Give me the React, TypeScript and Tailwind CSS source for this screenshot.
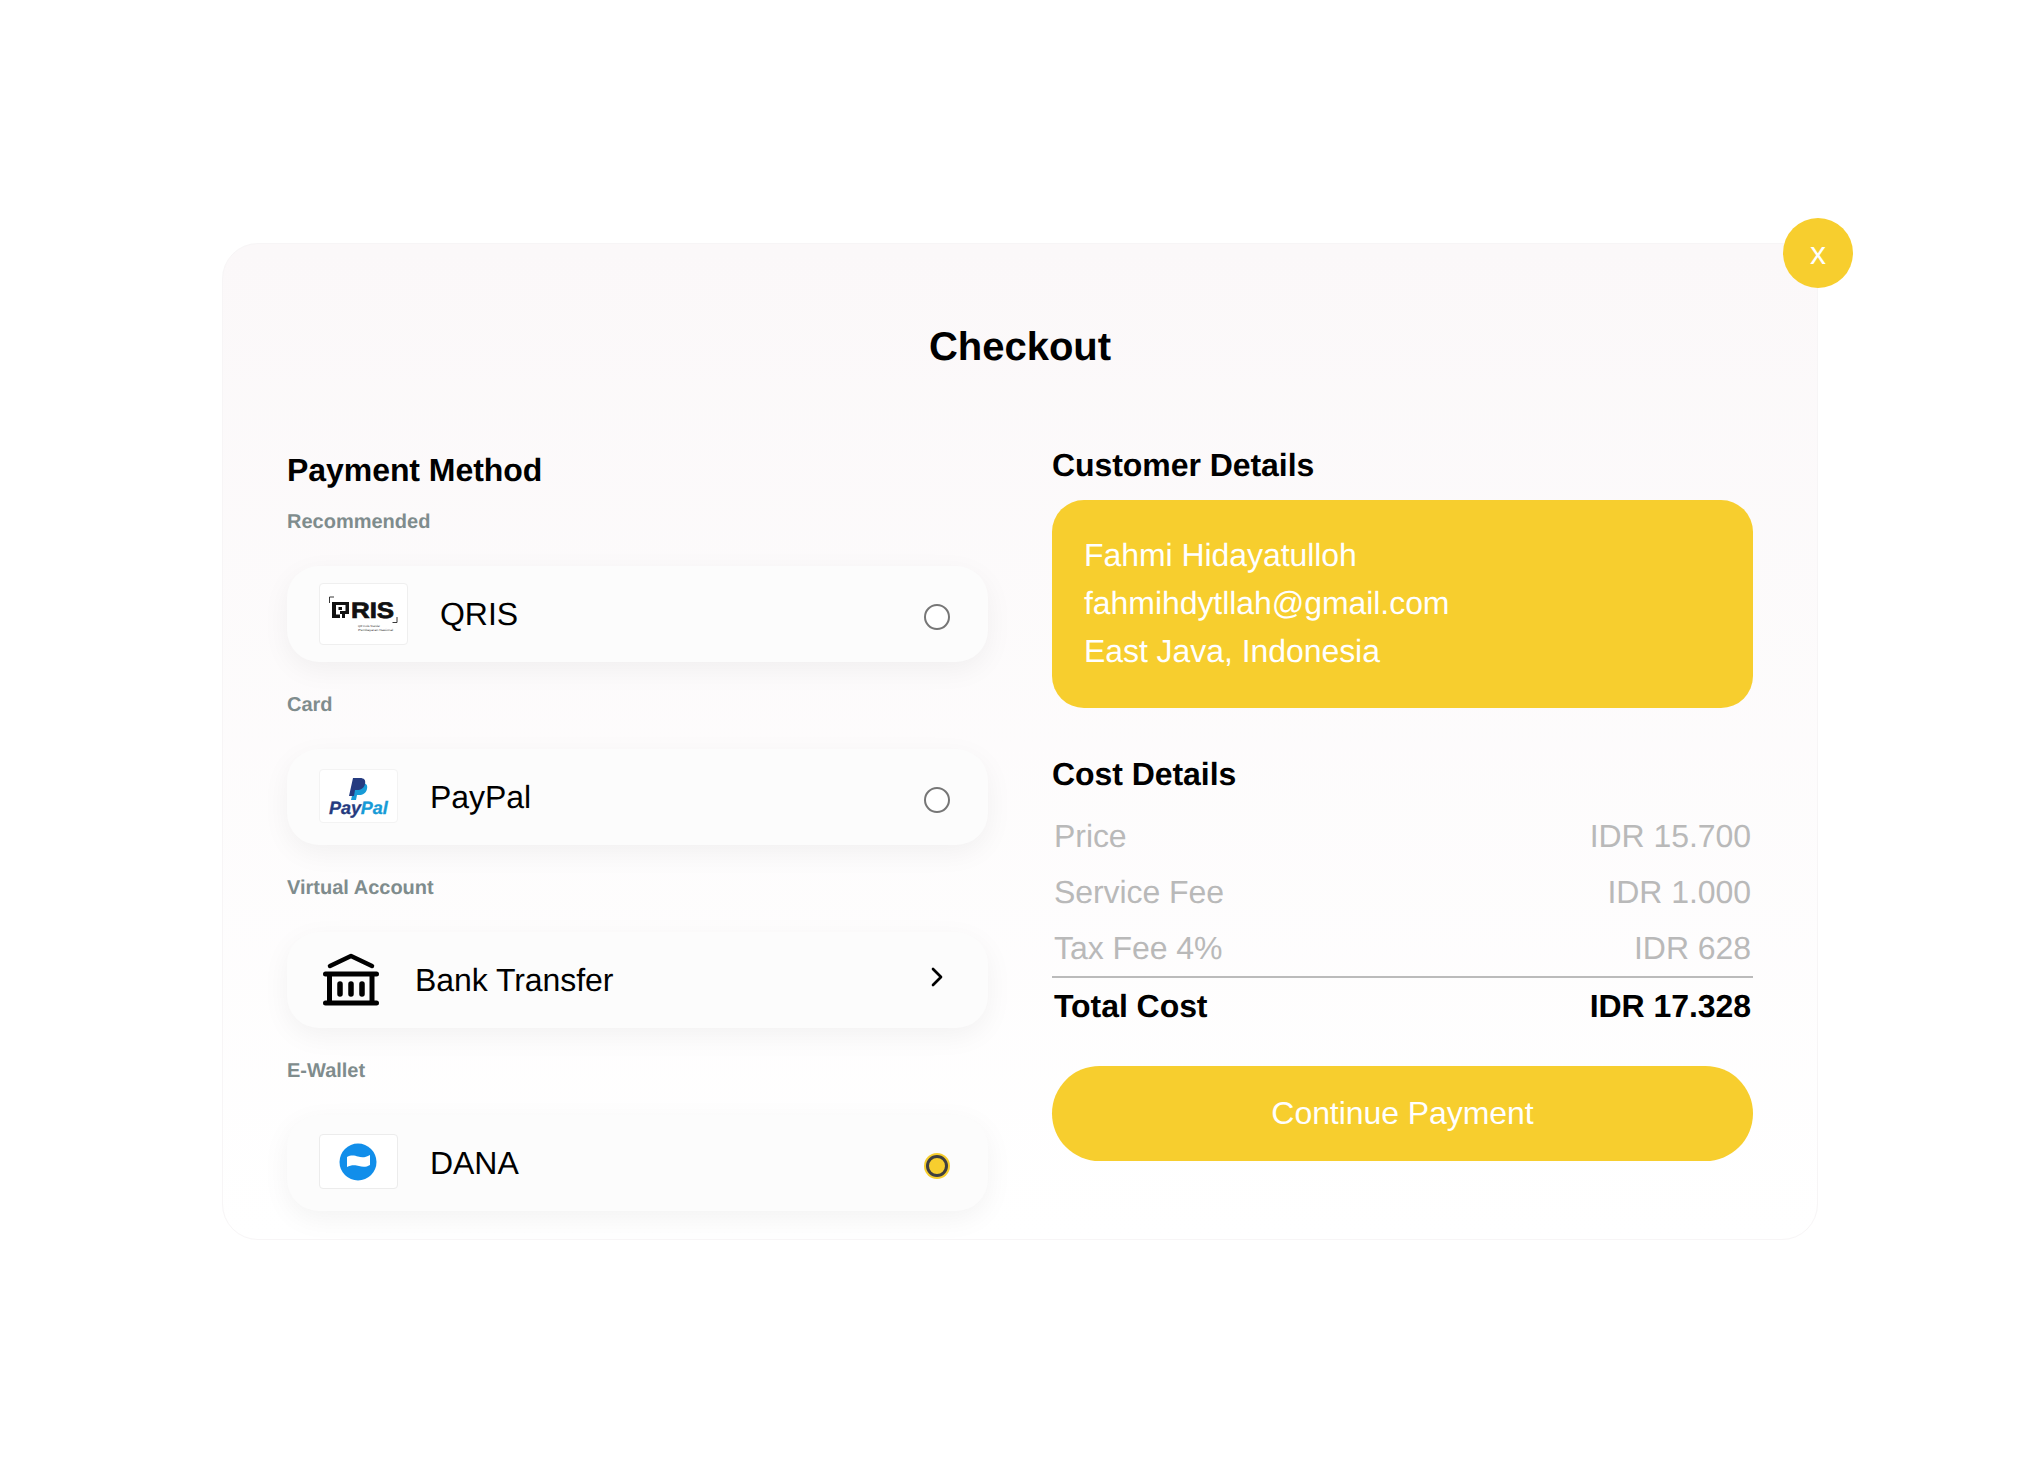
import { ChevronRight } from 'lucide-react';
import type { ReactNode } from 'react';

const QrisLogo = () => (
    <div className="flex h-[62px] w-[89px] shrink-0 rounded-[4px] border border-[#efefef] bg-white">
        <svg width="87" height="60" viewBox="1 1 87 60">
            <path d="M10.500 20v-6h4.500M78 34v5.500h-4.500" fill="none" stroke="#222" strokeWidth="0.9" />
            {/* Q mark */}
            <g fill="#111">
                <rect x="13" y="19" width="4" height="16" />
                <rect x="13" y="19" width="17" height="3" />
                <rect x="26.500" y="19" width="3.500" height="12" />
                <rect x="21" y="28" width="9" height="3" />
                <rect x="13" y="31.500" width="8" height="3.500" />
                <rect x="23" y="31" width="3" height="4" />
                <rect x="19.500" y="24" width="3.500" height="3" />
            </g>
            <text x="32" y="35" fontSize="22.500" fontWeight="700" stroke="#111" strokeWidth="0.7" fontFamily="'Liberation Sans', sans-serif" fill="#111" textLength="43" lengthAdjust="spacingAndGlyphs">RIS</text>
            <text x="39" y="43.500" fontSize="3" fontFamily="'Liberation Sans', sans-serif" fill="#444" textLength="22" lengthAdjust="spacingAndGlyphs">QR Code Standar</text>
            <text x="39" y="47.500" fontSize="3" fontFamily="'Liberation Sans', sans-serif" fill="#444" textLength="35" lengthAdjust="spacingAndGlyphs">Pembayaran Nasional</text>
        </svg>
    </div>
);

const PaypalLogo = () => (
    <div className="mb-[3px] flex h-[54px] w-[79px] shrink-0 rounded-[4px] border border-[#f3f3f3] bg-white">
        <svg width="77" height="52" viewBox="1 -1 77 52">
            <path d="M36 12h7c4 0 6 2 5 6c-1 4-4 6-8 6h-2l-1 5h-5z" fill="#179bd7" />
            <path d="M34 7h7c4 0 6 2 5 6c-1 4-4 6-8 6h-2l-1 6h-5z" fill="#253b80" />
            <text x="10" y="43" fontSize="18" fontWeight="700" fontStyle="italic" strokeWidth="0.3" fontFamily="'Liberation Sans', sans-serif">
                <tspan fill="#253b80" stroke="#253b80">Pay</tspan>
                <tspan fill="#179bd7" stroke="#179bd7">Pal</tspan>
            </text>
        </svg>
    </div>
);

const DanaLogo = () => (
    <div className="mb-[3px] flex h-[55px] w-[79px] shrink-0 rounded-[4px] border border-[#ececec] bg-white">
        <svg width="77" height="53" viewBox="1 1 77 53">
            <circle cx="39" cy="28" r="18.500" fill="#118eea" />
            <path d="M28 23c4-2.500 8-1.500 11-.5s7 1.500 12-1.500v10c-4 2.500-8 2-11 1s-8-1.500-12 1z" fill="#fff" />
        </svg>
    </div>
);

const BankIcon = () => (
    <svg width="64" height="64" viewBox="0 0 64 64" fill="none" stroke="#000" strokeLinecap="round" strokeLinejoin="round" className="shrink-0">
        <path d="M11 18 32 8l21 10" strokeWidth="4.500" />
        <path d="M6.500 26h51M6.500 55h51M10.500 26v29M53 26v29" strokeWidth="5" />
        <path d="M21 36v10M32 36v10M43 36v10" strokeWidth="5.500" />
    </svg>
);

const Radio = ({ checked }: { checked?: boolean }) =>
    checked ? (
        <div className="ml-auto mr-[38px] mt-[6px] h-[26px] w-[26px] rounded-full bg-[#f7ce2e] p-[2px]">
            <div className="h-full w-full rounded-full border-[3px] border-[#3f3f3f] bg-[#f7ce2e]" />
        </div>
    ) : (
        <div className="ml-auto mr-[38px] mt-[6px] h-[26px] w-[26px] rounded-full border-2 border-[#767676] bg-white" />
    );

const MethodGroup = ({ label, first, children }: { label: string; first?: boolean; children: ReactNode }) => (
    <div>
        <p className={`${first ? 'mt-[22px]' : 'mt-8'} mb-8 text-[20px] leading-[23px] font-bold tracking-normal text-[#7f8c8d]`}>{label}</p>
        <div className="flex h-[96px] items-center rounded-[32px] bg-[#fcfcfc] pl-8 shadow-[0_8px_28px_rgba(0,0,0,0.05)]">
            {children}
        </div>
    </div>
);

const CostRow = ({ label, value }: { label: string; value: string }) => (
    <div className="flex h-14 items-center justify-between px-0.5 text-[#b9b9b9]">
        <span>{label}</span>
        <span>{value}</span>
    </div>
);

const App = () => {
    return (
        <div className="flex h-[1483px] items-center justify-center bg-white font-['Liberation_Sans',sans-serif] text-black [text-rendering:geometricPrecision]">
            <div className="relative h-[997px] w-[1596px] rounded-[36px] border border-[#f7f5f6] bg-gradient-to-b from-[#fbf8f9] to-white px-[64px] pt-[80px]">
                <button className="absolute -top-[26px] -right-[36px] flex h-[70px] w-[70px] items-center justify-center rounded-full bg-[#f7ce2e] text-[32px] text-white">
                    x
                </button>

                <h1 className="text-center text-[40px] leading-[46px] font-bold">Checkout</h1>

                <div className="mt-[77px] grid grid-cols-2 gap-[64px] text-[32px] leading-[37px] tracking-[-0.06px]">
                    {/* Payment methods */}
                    <div className="pt-[5px]">
                        <h2 className="font-bold">Payment Method</h2>
                        <MethodGroup label="Recommended" first>
                            <QrisLogo />
                            <span className="ml-8">QRIS</span>
                            <Radio />
                        </MethodGroup>
                        <MethodGroup label="Card">
                            <PaypalLogo />
                            <span className="ml-8">PayPal</span>
                            <Radio />
                        </MethodGroup>
                        <MethodGroup label="Virtual Account">
                            <BankIcon />
                            <span className="ml-8">Bank Transfer</span>
                            <div className="mr-[38px] mb-[6px] ml-auto flex h-[26px] w-[26px] items-center justify-center">
                                <ChevronRight size={32} strokeWidth={2} className="shrink-0" />
                            </div>
                        </MethodGroup>
                        <MethodGroup label="E-Wallet">
                            <DanaLogo />
                            <span className="ml-8">DANA</span>
                            <Radio checked />
                        </MethodGroup>
                    </div>

                    {/* Customer + cost */}
                    <div>
                        <h2 className="font-bold">Customer Details</h2>
                        <div className="mt-4 rounded-[32px] bg-[#f7ce2e] px-8 pt-[31px] pb-[33px] leading-[48px] text-white">
                            <p>Fahmi Hidayatulloh</p>
                            <p>fahmihdytllah@gmail.com</p>
                            <p>East Java, Indonesia</p>
                        </div>

                        <h2 className="mt-[48px] font-bold">Cost Details</h2>
                        <div className="mt-[15px]">
                            <CostRow label="Price" value="IDR 15.700" />
                            <CostRow label="Service Fee" value="IDR 1.000" />
                            <CostRow label="Tax Fee 4%" value="IDR 628" />
                            <div className="h-0.5 bg-[#bbbbbb]" />
                            <div className="flex h-14 items-center justify-between px-0.5 font-bold">
                                <span>Total Cost</span>
                                <span>IDR 17.328</span>
                            </div>
                        </div>

                        <button className="mt-8 flex h-[95px] w-full items-center justify-center rounded-full bg-[#f7ce2e] text-white">
                            Continue Payment
                        </button>
                    </div>
                </div>
            </div>
        </div>
    );
};

export default App;
